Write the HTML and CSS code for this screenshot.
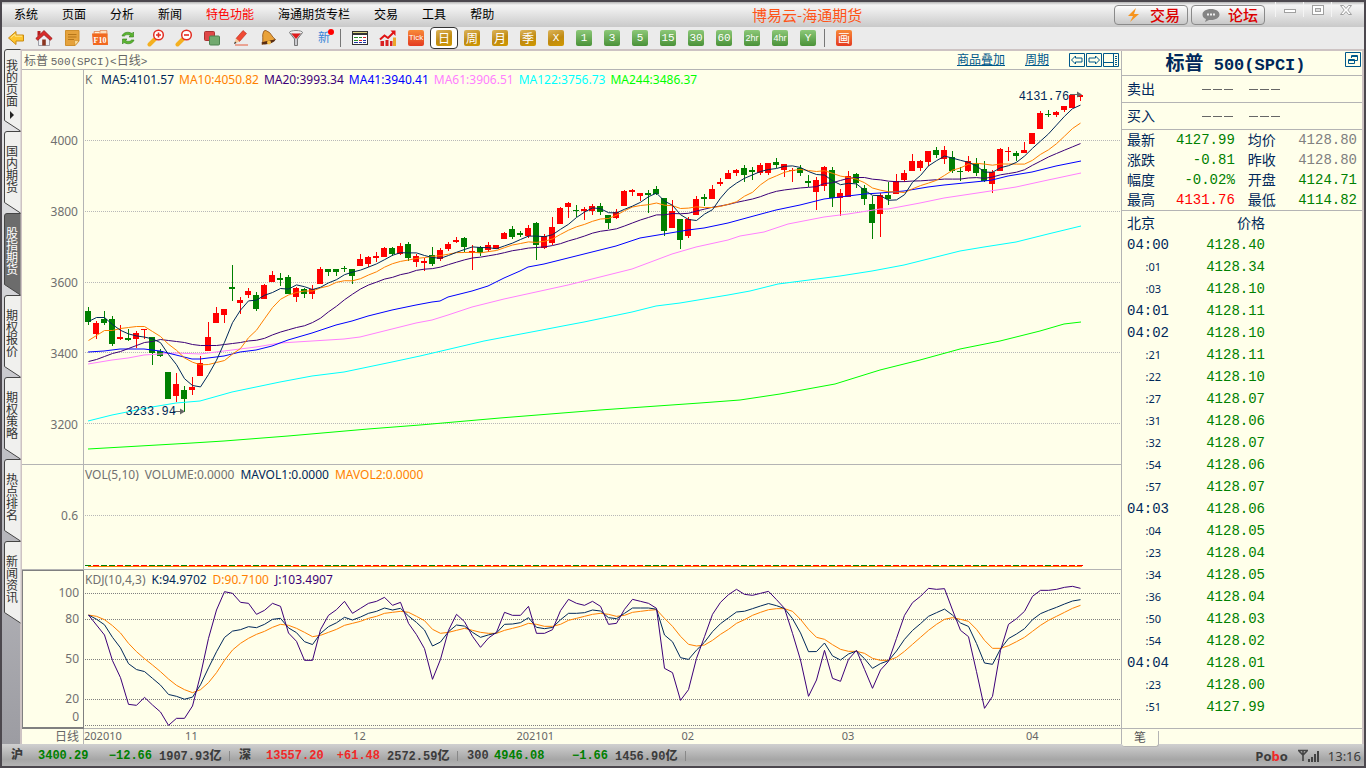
FILE: index.html
```html
<!DOCTYPE html>
<html lang="zh-CN">
<head>
<meta charset="utf-8">
<title>博易云-海通期货</title>
<link rel="stylesheet" href="styles.css">
</head>
<body>
<div class="app">
  <header class="menubar">
    <nav class="menu">
      <button>系统</button><button>页面</button><button>分析</button><button>新闻</button><button class="hot">特色功能</button><button>海通期货专栏</button><button>交易</button><button>工具</button><button>帮助</button>
    </nav>
    <h1 class="app-title">博易云-海通期货</h1>
    <div class="quick">
      <button class="pill"><svg width="16" height="16" viewBox="0 0 16 16"><path d="M10 1 2 9h5l-3 6 9-8H8z" fill="#f7941d"/></svg>交易</button>
      <button class="pill"><svg width="18" height="16" viewBox="0 0 18 16"><path d="M9 2c5 0 8.500 2.400 8.500 5.500S14 13 9 13l-2 0-4 2 1-3C1.500 11 .5 9.500.5 7.500.5 4.400 4 2 9 2z" fill="#858585"/><path d="M5 6.500h2v2H5zM8 6.500h2v2H8zM11 6.500h2v2h-2z" fill="#eee"/></svg>论坛</button>
    </div>
    <div class="win">
      <button aria-label="最小化"><svg width="14" height="14" viewBox="0 0 14 14"><rect x="1.500" y="6.500" width="11" height="3" fill="#fff" stroke="#a0a0a0"/></svg></button>
      <button aria-label="最大化"><svg width="14" height="14" viewBox="0 0 14 14"><rect x="1.500" y="2.500" width="11" height="9" fill="#fff" stroke="#a0a0a0"/><rect x="4.500" y="5.500" width="5" height="3" fill="#ddd" stroke="#a0a0a0"/></svg></button>
      <button aria-label="关闭"><svg width="14" height="14" viewBox="0 0 14 14"><path d="M1.500 2.500h3L7 5.500l2.500-3h3L8.800 7l3.700 4.500h-3L7 8.500l-2.500 3h-3L5.200 7z" fill="#fff" stroke="#a0a0a0"/></svg></button>
    </div>
  </header>

  <div class="toolbar">
    <button aria-label="返回"><svg width="18" height="18" viewBox="0 0 18 18"><path d="M1.500 9 9 2.500V6h7.500v6H9v3.500z" fill="#fdc52e" stroke="#c98a12"/><path d="M4 8.600 8 5.200V7.200h7" fill="none" stroke="#ffe78f"/></svg></button>
    <button aria-label="主页"><svg width="18" height="18" viewBox="0 0 18 18"><path d="M3.500 9v7.500h11V9L9 4.500z" fill="#ededf2" stroke="#8b8b95" stroke-width=".8"/><path d="M.8 9.500 9 1.500l8.200 8-2 1.800L9 5.800l-6.200 5.500z" fill="#d92a2a" stroke="#8d1414" stroke-width=".7"/><path d="M2.500 2H5.500v3L2.500 7.500z" fill="#b51d1d"/><path d="M7.200 10.500h3.600v6H7.200z" fill="#8a3520"/></svg></button>
    <button aria-label="记事"><svg width="18" height="18" viewBox="0 0 18 18"><path d="M2.500 1.500h13.500v10.500L12 16.500H2.500z" fill="#e5a23c" stroke="#cf8f2c"/><path d="M5 5.500h8.500M5 8h8.500M5 10.500h6" stroke="#b5761a"/><path d="M16 12l-4.500-.5.5 5z" fill="#ffe2a0" stroke="#c88420" stroke-width=".6"/></svg></button>
    <button aria-label="F10"><svg width="18" height="18" viewBox="0 0 18 18"><path d="M3 2.500h6v-1h7v5H3z" fill="#f9c59c" stroke="#d8743c" stroke-width=".6"/><path d="M1 4.500h15.500l.5 11.500H2z" fill="#f1681e"/><path d="M4 3.500h4M10 3h5" stroke="#fff3d8"/><text x="9" y="14" class="t-f10">F10</text></svg></button>
    <button aria-label="刷新"><svg width="18" height="18" viewBox="0 0 18 18"><path d="M3 7C4 3.500 9 2 13 4.500l1.500-1.500v5H10l1.500-1.500C9 5 6.500 5.500 5.500 7z" fill="#5cb531" stroke="#2f7d17" stroke-width=".6"/><path d="M15 11c-1 3.500-6 5-10 2.500L3.500 15v-5H8l-1.500 1.500c2.500 1.500 5 1 6-.500z" fill="#5cb531" stroke="#2f7d17" stroke-width=".6"/></svg></button>
    <button aria-label="放大"><svg width="18" height="18" viewBox="0 0 18 18"><path d="m8 10-5.500 5.500" stroke="#f4b020" stroke-width="4" stroke-linecap="round"/><circle cx="11.500" cy="6" r="4.800" fill="#fff" stroke="#e32d22" stroke-width="1.500"/><path d="M9 6h5M11.500 3.500v5" stroke="#e32d22" stroke-width="1.600"/></svg></button>
    <button aria-label="缩小"><svg width="18" height="18" viewBox="0 0 18 18"><path d="m8 10-5.500 5.500" stroke="#f4b020" stroke-width="4" stroke-linecap="round"/><circle cx="11.500" cy="6" r="4.800" fill="#fff" stroke="#e32d22" stroke-width="1.500"/><path d="M9 6h5" stroke="#e32d22" stroke-width="1.600"/></svg></button>
    <button aria-label="叠加"><svg width="18" height="18" viewBox="0 0 18 18"><rect x="1.500" y="2.500" width="10" height="9" rx="1" fill="#df4747" stroke="#a33"/><rect x="6.500" y="7" width="10" height="9" rx="1" fill="#71a96f" stroke="#4c8350"/></svg></button>
    <button aria-label="画线"><svg width="18" height="18" viewBox="0 0 18 18"><path d="M5 9.500 12 1.500l3.500 3-7 8z" fill="#f04a34" stroke="#b5281a" stroke-width=".6"/><path d="M5 9.500 8.500 12.500 3 15z" fill="#f6c99a"/><path d="m3 15 1-2.500 1.500 1.500z" fill="#333"/><path d="M4 16h13" stroke="#e85b3b"/></svg></button>
    <button aria-label="提醒"><svg width="18" height="18" viewBox="0 0 18 18"><path d="M4.500 3c.5-1.800 2.500-2 3.500-.8C12 3 12.500 8 16.500 10.500L3 15.500C5 11 2.500 6 4.500 3z" fill="#e9a23a" stroke="#8a4d12" stroke-width=".8"/><path d="M2.500 13.500c0 4 13 1 14-3-4 .500-10 1.500-14 3z" fill="#5a2d12"/><circle cx="10" cy="13.500" r="2" fill="#f7c04a"/></svg></button>
    <button aria-label="筛选"><svg width="18" height="18" viewBox="0 0 18 18"><path d="M2.500 3.500 7.500 10v6.500h3V10l5-6.500z" fill="#c9c9ce" stroke="#777"/><ellipse cx="9" cy="3.500" rx="6.500" ry="2" fill="#eee" stroke="#888"/><path d="M4.500 4.500h9L9.500 9.500h-1z" fill="#e01b1b"/></svg></button>
    <button class="new">新<i></i></button>
    <span class="bar"></span>
    <button aria-label="列表"><svg width="18" height="18" viewBox="0 0 18 18" shape-rendering="crispEdges"><path d="M1 2h16v14H1z" fill="#333"/><path d="M2 3h14v1H2z" fill="#d8d080"/><path d="M2 6h14v9H2z" fill="#fff"/><path d="M3 8.500h4M3 11.500h4M8 8.500h3" stroke="#2e8b2e"/><path d="M8 11.500h3M12 8.500h3" stroke="#d22"/><path d="M3 13.500h4M8 13.500h3M12 11.500h3M12 13.500h3" stroke="#2436a0"/></svg></button>
    <button aria-label="走势"><svg width="18" height="18" viewBox="0 0 18 18"><path d="M1.500 12h3.500v5H1.500zM6.500 11h3v6h-3z" fill="#d92222"/><path d="M11 12h2.500v5H11z" fill="#d92222"/><path d="M14 8.500h3V17h-3z" fill="#eca72c"/><path d="m1 10.500 4.500-4L9 9l6-6" fill="none" stroke="#e01313" stroke-width="2"/><path d="M11.500 1.500h5V7z" fill="#e01313"/></svg></button>
    <button><span class="tag red tick">Tick</span></button>
    <button class="on"><span class="tag gold">日</span></button>
    <button><span class="tag gold">周</span></button>
    <button><span class="tag gold">月</span></button>
    <button><span class="tag gold">季</span></button>
    <button><span class="tag gold num">X</span></button>
    <button><span class="tag green num">1</span></button>
    <button><span class="tag green num">3</span></button>
    <button><span class="tag green num">5</span></button>
    <button><span class="tag green num">15</span></button>
    <button><span class="tag green num">30</span></button>
    <button><span class="tag green num">60</span></button>
    <button><span class="tag green hr">2hr</span></button>
    <button><span class="tag green hr">4hr</span></button>
    <button><span class="tag green num">Y</span></button>
    <span class="bar"></span>
    <button><span class="tag red">画</span></button>
  </div>

  <main class="main">
    <nav class="tabs" id="tabs">
      <button class="tab first"><span>我的页面</span><i></i></button>
      <button class="tab"><span>国内期货</span></button>
      <button class="tab active"><span>股指期货</span></button>
      <button class="tab"><span>期权报价</span></button>
      <button class="tab"><span>期权策略</span></button>
      <button class="tab"><span>热点排名</span></button>
      <button class="tab"><span>新闻资讯</span></button>
    </nav>

    <section class="charts">
      <div class="chart-head">
        <span class="symbol">标普 <span class="m">500(SPCI)&lt;</span>日线<span class="m">&gt;</span></span>
        <a href="#">商品叠加</a>
        <a href="#">周期</a>
        <div class="head-tools">
          <button aria-label="左"><svg width="16" height="14" viewBox="0 0 16 14"><path d="M.5.5h15v13H.5zM2.500 7l4-4v2H13v4H6.500v2z"/></svg></button>
          <button aria-label="右"><svg width="16" height="14" viewBox="0 0 16 14"><path d="M.5.5h15v13H.5zM13.500 7l-4-4v2H3v4h6.500v2z"/></svg></button>
          <button aria-label="布局"><svg width="16" height="14" viewBox="0 0 16 14"><path d="M.5.5h15v13H.5zM10.500.5v13M.5 9.500h10M12 3.500h2M12 5.500h2M12 7.500h2M12 9.500h2M12 11.500h2"/></svg></button>
        </div>
      </div>

      <div class="axis price-axis"><span>4000</span><span>3800</span><span>3600</span><span>3400</span><span>3200</span></div>
      <div class="plot">
        <svg id="price" viewBox="84 70 1037 394" preserveAspectRatio="none"></svg>
        <div class="legend price-legend"><span class="grey">K</span><span class="navy">MA5:4101.57</span><span class="orange">MA10:4050.82</span><span class="purple">MA20:3993.34</span><span class="blue">MA41:3940.41</span><span class="pink">MA61:3906.51</span><span class="cyan">MA122:3756.73</span><span class="lime">MA244:3486.37</span></div>
        <span class="mark high">4131.76</span>
        <span class="mark low">3233.94</span>
      </div>

      <div class="axis vol-axis"><span>0.6</span></div>
      <div class="plot">
        <svg id="volume" viewBox="84 465 1037 104" preserveAspectRatio="none"></svg>
        <div class="legend"><span class="grey">VOL(5,10)</span><span class="grey">VOLUME:0.0000</span><span class="navy">MAVOL1:0.0000</span><span class="orange">MAVOL2:0.0000</span></div>
      </div>

      <div class="axis kdj-axis"><span>100</span><span>80</span><span class="wide">50</span><span>20</span><span class="slim">0</span></div>
      <div class="plot">
        <svg id="kdj" viewBox="84 570 1037 158" preserveAspectRatio="none"></svg>
        <div class="legend"><span class="grey">KDJ(10,4,3)</span><span class="navy">K:94.9702</span><span class="orange">D:90.7100</span><span class="purple">J:103.4907</span></div>
      </div>

      <div class="period">日线</div>
      <div class="months" id="months"></div>
    </section>

    <aside class="quote">
      <div class="q-title"><h2>标普<span> 500(SPCI)</span></h2><button aria-label="还原"><svg width="16" height="15" viewBox="0 0 16 15"><path d="M.5.5h15v14H.5zM6.500 6V3.500h6v5H10M6.500 4.500h6M3.500 7.500h6v4h-6zM3.500 8.500h6"/></svg></button></div>
      <div class="q-side"><span>卖出</span><i></i><i></i></div>
      <div class="q-side"><span>买入</span><i></i><i></i></div>
      <table class="stats">
        <tr><th>最新</th><td>4127.99</td><th>均价</th><td class="grey">4128.80</td></tr>
        <tr><th>涨跌</th><td>-0.81</td><th>昨收</th><td class="grey">4128.80</td></tr>
        <tr><th>幅度</th><td>-0.02%</td><th>开盘</th><td>4124.71</td></tr>
        <tr><th>最高</th><td class="up">4131.76</td><th>最低</th><td>4114.82</td></tr>
      </table>
      <div class="ticks">
        <table>
          <thead><tr><th>北京</th><th>价格</th></tr></thead>
          <tbody id="ticks"></tbody>
        </table>
      </div>
      <div class="q-tabs"><button>笔</button></div>
    </aside>
  </main>

  <footer class="status">
    <b class="name">沪</b><b class="v1 down">3400.29</b><b class="v2 down">−12.66</b><b class="v3">1907.93<span>亿</span></b><i></i>
    <b class="name">深</b><b class="v1 up">13557.20</b><b class="v2 up">+61.48</b><b class="v3">2572.59<span>亿</span></b><i></i>
    <b class="name">300</b><b class="v1 down">4946.08</b><b class="v2 down">−1.66</b><b class="v3">1456.90<span>亿</span></b><i></i>
    <span class="brand">Po<em>b</em>o</span>
    <svg width="24" height="14" viewBox="0 0 24 14"><path d="M1 1.500h10M6 1v11M2 2l4 4 4-4" fill="none" stroke="#444" stroke-width="1.600"/><path d="M11 10h2v3h-2zM14 8h2v5h-2zM17 5h2v8h-2zM20 2h2v11h-2z" fill="#444"/></svg>
    <time>13:16</time>
  </footer>
</div>
<script src="charts.js"></script>
</body>
</html>
```
FILE: styles.css
```css
* { box-sizing: border-box; }

body {
  margin: 0;
  font: 12px/16px "Liberation Sans", "Noto Sans CJK SC", sans-serif;
  color: #000;
}

button {
  margin: 0;
  padding: 0;
  border: 0;
  background: none;
  font: inherit;
  color: inherit;
}

svg { display: block; }
h1, h2 { margin: 0; font-weight: normal; }
i, em { font-style: normal; }

.app {
  display: grid;
  grid-template-rows: 25px 22px minmax(0, 1fr) 22px;
  height: 100vh;
  min-height: 700px;
  border: 2px solid #4c484e;
  background: #d2d2d6;
}

/* menu bar */
.menubar {
  display: flex;
  align-items: center;
  background: linear-gradient(#b4b4b4, #f4f4f4 3px, #ececec 8px, #c9c9c9);
}
.menu { display: flex; gap: 24px; padding: 1px 0 0 12px; white-space: nowrap; }
.menu .hot { color: #f00; }
.app-title {
  flex: 1;
  padding-left: 6px;
  text-align: center;
  font: 15px/20px "Noto Sans CJK SC", sans-serif;
  color: #ff5418;
}
.quick { display: flex; gap: 3px; }
.pill {
  display: flex;
  align-items: center;
  justify-content: center;
  gap: 8px;
  width: 74px;
  height: 20px;
  padding-left: 4px;
  border: 1px solid #8a8a8a;
  border-radius: 4px;
  background: linear-gradient(#fff, #e4e4e4 45%, #c8c8c8);
  font: 500 15px/18px "Noto Sans CJK SC", sans-serif;
  color: #dc0000;
}
.pill svg { flex: none; }
.win { display: flex; align-self: flex-start; width: 99px; padding-left: 10px; }
.win button {
  display: flex;
  align-items: center;
  justify-content: center;
  width: 28px;
  height: 15px;
  border-left: 1px solid #f4f4f4;
}

/* toolbar */
.toolbar { display: flex; align-items: center; background: #ebebeb; }
.toolbar button {
  display: flex;
  align-items: center;
  justify-content: center;
  width: 28px;
  height: 22px;
}
.toolbar .bar { width: 8px; height: 18px; background: linear-gradient(#777, #777) 2px 0 / 1px 100% no-repeat; }
.toolbar .on { border: 1px solid #333; border-radius: 4px; background: #fff; }
.new { position: relative; font-size: 12px; color: #3a86d8; }
.new i { position: absolute; right: 4px; top: 2px; width: 6px; height: 6px; border-radius: 50%; background: #f00; }
.t-f10 { font: bold 8px "Liberation Serif", serif; fill: #fff; text-anchor: middle; }
.tag {
  width: 16px;
  height: 16px;
  border-radius: 2px;
  font: 12px/15px "Noto Sans CJK SC", sans-serif;
  text-align: center;
  color: #fff;
}
.tag.gold { background: linear-gradient(160deg, #dcb45c, #c08a10 55%, #d19a00); }
.tag.green { background: linear-gradient(#8cc878, #4a9238); }
.tag.red { background: linear-gradient(#f88a38, #e43a20); }
.tag.num { font: 11px/16px "Liberation Mono", monospace; }
.tag.hr { font: 9px/16px "Liberation Sans", sans-serif; }
.tag.tick { font: 8px/16px "Liberation Sans", sans-serif; }

/* main area */
.main {
  display: grid;
  grid-template-columns: 18px minmax(0, 1fr) 243px;
  min-height: 0;
}

.tabs { display: flex; flex-direction: column; padding: 0 0 0 2px; background: linear-gradient(#e9e9ea, #d0d0d4 40%, #9c9ca2); }
.tab {
  position: relative;
  z-index: 0;
  display: flex;
  flex-direction: column;
  align-items: center;
  height: 82px;
  padding-top: 14px;
  color: #333;
}
.tab svg { position: absolute; z-index: -1; left: 0; top: 0; overflow: visible; }
.tab path { fill: #f0f0ee; stroke: #444; }
.tab span { width: 13px; font: 12px/12px "Noto Sans CJK SC", sans-serif; word-break: break-all; }
.tab.first { padding-top: 10px; }
.tab.first i { margin-top: 4px; border: 4px solid transparent; border-left-color: #222; border-right-width: 0; }
.tab.active { color: #fff; }
.tab.active path { fill: #6c6c6c; }

.charts {
  display: grid;
  grid-template: 19px minmax(0, 395fr) minmax(0, 105fr) minmax(0, 159fr) 15px / 62px minmax(0, 1fr);
  border: solid #cdc3c3;
  border-width: 2px 0 0 2px;
  background: #ffffea;
}
.chart-head {
  grid-column: 1 / -1;
  display: flex;
  align-items: center;
  gap: 20px;
  padding: 0 2px;
  border-bottom: 1px solid #b4b4b4;
  color: #666;
}
.symbol { flex: 1; font-family: "Noto Sans CJK SC", sans-serif; font-size: 12px; }
.symbol .m { font: 11px "Liberation Mono", monospace; }
.chart-head a { color: #00588a; }
.head-tools { display: flex; gap: 1px; }
.head-tools path, .q-title path { fill: none; stroke: #00588a; }

.axis {
  display: flex;
  flex-direction: column;
  border: solid #b4b4b4;
  border-width: 0 1px 1px 0;
  padding-right: 5px;
  font: 12px/12px "Noto Sans", sans-serif;
  color: #707070;
}
.axis::before, .axis::after { content: ""; }
.axis span { display: flex; align-items: center; justify-content: flex-end; min-height: 0; }
.price-axis::before { flex: 35; }
.price-axis span { flex: 71; }
.price-axis::after { flex: 4; }
.vol-axis span { flex: 102; }
.vol-axis::after { flex: 2; }
.kdj-axis { border: 1px solid #808080; border-width: 1px 1px 2px 1px; padding-right: 4px; }
.kdj-axis::before { flex: 9; }
.kdj-axis span { flex: 26; }
.kdj-axis .wide { flex: 54; }
.kdj-axis .slim { flex: 10; }
.kdj-axis::after { flex: 5; }

.plot { position: relative; border-bottom: 1px solid #b4b4b4; }
.plot svg { width: 100%; height: 100%; }
.plot .grid { stroke: #b8b8b8; stroke-dasharray: 1 1; shape-rendering: crispEdges; }
#kdj .grid { stroke: #808080; }
.bars rect { shape-rendering: crispEdges; }
.line { fill: none; stroke-width: 1; vector-effect: non-scaling-stroke; }

.legend {
  position: absolute;
  left: 1px;
  top: 2px;
  display: flex;
  gap: 6px;
  font: 12px/16px "Noto Sans", sans-serif;
  white-space: nowrap;
}
.price-legend { gap: 5px; }
.price-legend .grey { width: 11px; }
.mark {
  position: absolute;
  font: 12px/14px "Liberation Mono", monospace;
  color: #00285a;
}
.mark.high { right: 5%; top: 5%; }
.mark.low { left: 4%; top: 85%; }

.grey { color: #707070; }
.navy { color: #00285a; }
.orange { color: #ff8000; }
.purple { color: #3c0078; }
.blue { color: #00f; }
.pink { color: #ff80ff; }
.cyan { color: #0ff; }
.lime { color: #0f0; }
.up { color: #f00; }
.down { color: #008000; }

.period {
  padding-right: 4px;
  border-right: 1px solid #b4b4b4;
  text-align: right;
  font: 12px/14px "Noto Sans CJK SC", sans-serif;
  color: #666;
}
.months { display: flex; font: 11px/14px "Noto Sans", sans-serif; color: #666; }

/* quote panel */
.quote {
  display: flex;
  flex-direction: column;
  min-height: 0;
  border: solid #cdc3c3;
  border-width: 2px 2px 0 0;
  background: #ffffea;
  box-shadow: inset 1px 0 #b4b4b4;
  padding-left: 1px;
  font-size: 14px;
  color: #00285a;
}
.q-title { display: flex; align-items: flex-start; height: 25px; padding: 1px 1px 0 4px; border-bottom: 1px solid #b4b4b4; }
.q-title h2 { flex: 1; text-align: center; font: bold 19px/20px "Noto Sans CJK SC", sans-serif; }
.q-title span { font: bold 17px/20px "Liberation Mono", monospace; white-space: pre; }
.q-side {
  display: flex;
  align-items: center;
  gap: 15px;
  height: 27px;
  padding-left: 5px;
  border-bottom: 1px solid #b4b4b4;
}
.q-side span { width: 60px; }
.q-side i { width: 32px; height: 1px; background: repeating-linear-gradient(90deg, #666 0 9px, transparent 9px 11px); }

table { border-collapse: collapse; table-layout: fixed; }
th, td { padding: 0; }
th { font-weight: normal; text-align: left; }
td { font: 14px/20px "Liberation Mono", monospace; text-align: right; color: #008000; }
.stats { width: 100%; flex: none; border-bottom: 1px solid #b4b4b4; }
.stats th { height: 20px; line-height: 20px; padding-left: 5px; width: 19%; }
.stats th + td + th { padding-left: 13px; width: 24%; }
.stats td:last-child { padding-right: 5px; width: 29%; }
.stats .grey { color: #808080; }
.stats .up { color: #f00; }
.ticks { flex: 1; min-height: 0; overflow: hidden; border-bottom: 1px solid #b4b4b4; padding-left: 5px; }
.ticks tr { height: 22px; }
.ticks thead tr { height: 23px; }
.ticks th:first-child { width: 44px; }
.ticks th:last-child { width: 94px; text-align: right; }
.ticks td { line-height: 22px; }
.ticks td:first-child { text-align: left; color: #00285a; }
.ticks td.sec { padding-right: 10px; text-align: right; font: 11px/22px "Noto Sans", sans-serif; }
.q-tabs { height: 15px; }
.q-tabs button {
  width: 37px;
  height: 16px;
  margin-top: -1px;
  position: relative;
  border: 1px solid #b4b4b4;
  border-top: 0;
  border-left: 0;
  border-radius: 0 0 3px 3px;
  background: #ffffea;
  font-size: 12px;
  line-height: 14px;
  color: #555;
}

/* status bar */
.status {
  display: flex;
  align-items: center;
  padding: 2px 3px 0 9px;
  background: linear-gradient(#d0d0d0, #a6a6a6 70%, #b4b4b4);
  font: bold 12px/16px "Liberation Mono", monospace;
  white-space: nowrap;
  color: #3c3c3c;
}
.status b { flex: none; }
.status .name { width: 27px; font-family: "Liberation Mono", "Noto Sans CJK SC", monospace; }
.status .v1 { width: 61px; }
.status .v2 { width: 53px; text-align: right; }
.status .v3 { width: 77px; padding-left: 7px; }
.status .v3 span { font-family: "Noto Sans CJK SC", sans-serif; }
.status i { width: 1px; height: 10px; margin-right: 9px; background: #888; }
.status .up { color: #f02828; }
.brand { margin-left: auto; margin-right: 9px; font: bold 13px/16px "Open Sans", sans-serif; }
.brand em { color: #f02828; }
.status time { margin-left: 7px; font: 13px/16px "Noto Sans", sans-serif; }
```
FILE: charts.js
```js
// Each session: direction, then high, body top, body bottom and low.
const candles = `g307 311 322 325|r321 323 334 339|g311 319 323 325|g316 319 344 346|r325 337 339 340|g329 338 340 341|r331 333 339 348|r329 329 330 339|g337 337 353 365|g349 351 356 357
g372 372 399 399|r373 384 396 402|g386 390 399 412|r377 387 390 395|r356 363 376 376|r322 337 351 351|r307 313 323 323|r309 309 315 323|g265 287 289 301|r297 300 303 314
r288 291 295 298|g292 295 309 311|r284 285 299 299|r271 275 282 282|g273 278 280 286|g275 277 294 294|r287 288 297 302|g288 289 294 298|r285 289 294 299|r267 269 284 284
g269 269 272 276|g269 269 272 276|g266 268 269 272|g269 269 276 284|r254 259 266 266|r256 257 264 267|r252 256 258 262|r247 248 257 257|g247 248 254 256|r243 246 254 255
g242 244 258 261|r254 256 262 267|r258 261 263 271|g247 255 264 266|r248 250 259 261|r242 244 249 251|r237 240 242 243|g237 238 247 252|r245 251 253 270|g246 247 253 256
r242 245 250 252|r245 245 249 249|r232 233 239 239|g226 229 237 239|g231 233 235 237|r225 228 236 238|g222 223 245 260|r234 236 248 249|r217 227 243 245|r207 208 224 224
r202 203 207 218|g205 210 211 217|r207 209 211 220|r204 206 211 215|g203 206 212 215|g215 215 223 229|r209 212 218 219|r190 191 206 206|r189 190 192 196|r193 193 196 201
g190 193 195 213|g186 189 194 195|g198 198 231 236|r200 211 228 228|g219 219 240 249|r217 219 236 238|r196 199 215 215|g194 197 199 206|r185 189 199 199|r178 182 184 186
r170 173 179 179|r169 170 173 176|g165 168 175 182|g167 170 172 180|r163 165 173 175|r163 163 173 175|g158 162 165 168|r164 164 170 177|r168 170 171 182|g165 168 173 176
g175 181 183 187|r177 180 192 210|r166 167 186 191|g167 170 198 207|r189 193 198 216|r171 176 197 197|g173 174 183 188|g185 188 199 205|g196 204 223 239|r193 195 214 237
g182 195 199 205|r174 181 194 194|r170 173 180 182|r154 161 171 171|r160 161 168 171|r151 151 162 166|g147 150 155 158|r146 150 159 164|g151 157 171 173|g167 171 172 181
r156 161 171 172|g158 163 173 176|g161 169 181 182|r170 172 184 193|r148 149 171 171|r147 151 152 161|g151 153 156 161|r142 150 153 153|r133 133 144 144|r111 113 129 129
g110 114 115 117|r111 112 115 117|r106 106 110 112|r95 95 108 108|r95 95 97 101`
  .split(/[|\n]/).map(s => [s[0], ...s.slice(1).split(' ').map(Number)]);

const kdjJ = [165,195,225,302,353,433,436,412,435,456,496,475,475,438,345,235,150,95,100,127,130,163,151,130,139,219,244,301,301,209,166,149,124,160,145,130,124,112,136,127,190,224,266,358,298,211,163,185,229,262,234,217,157,166,166,139,220,220,209,152,118,130,136,124,139,193,190,148,118,124,130,145,325,338,421,389,295,230,163,127,104,88,103,106,100,94,119,145,220,300,409,360,271,355,364,298,271,328,385,330,304,235,166,128,109,85,88,86,150,211,230,335,445,409,271,193,176,154,109,91,91,88,82,79,85];
const kdjD = [165,169,179,197,219,250,275,296,315,335,357,376,389,398,389,368,338,301,270,250,235,223,214,202,193,196,205,217,230,226,217,208,196,190,184,175,169,160,157,154,157,169,182,208,220,217,211,205,211,217,220,220,211,205,199,190,193,199,199,193,181,175,169,163,160,163,169,166,157,154,151,149,175,199,229,253,258,255,241,223,208,190,179,166,157,149,146,146,154,178,208,232,238,254,268,274,274,280,295,301,301,292,274,253,232,211,193,178,173,178,184,208,241,265,265,257,245,232,214,196,181,169,157,145,136];

const x = i => 88 + 8 * i;
const fill = { r: '#f00', g: '#008000' };
const close = candles.map(c => c[0] === 'g' ? c[3] : c[2]);
const grid = rows => rows.map(y => `<path class="grid" d="M85 ${y}.5H1121"/>`).join('');
const line = (points, color) => `<polyline class="line" stroke="${color}" points="${points}"/>`;
const series = values => values.map((v, i) => `${x(i) + .5},${(v + .5).toFixed(2)}`).join(' ');

// Moving average over n sessions; seed holds the values before the window is full.
function average(n, seed) {
  return close.map((_, i) => i < seed.length ? seed[i]
    : close.slice(i - n + 1, i + 1).reduce((a, b) => a + b) / n);
}

const ma5 = average(5, [321,317,317,324]);
const ma10 = average(10, [340,335,330,330,328,327,326,326,331]);
const ma20 = average(20, [361,359,356,353,351,348,345,342,341,339,340,341,342,344,345,345,345,344,343]);
const ma41 = '88,352 104,351 120,349 144,349 160,351 176,355 192,359 200,359 224,356 240,352 256,350 272,346 288,340 312,333 336,325 352,321 368,316 392,310 416,305 432,302 440,301 448,297 472,291 488,286 504,278 520,271 528,267 544,264 568,258 600,250 616,246 640,238 664,234 688,230 704,228 728,223 750,217 776,210 800,205 824,199 848,196 864,194 880,193 904,191 928,187 944,185 984,181 992,180 1008,176 1032,172 1056,166 1081,161';
const ma61 = '88,364 112,360 128,358 144,355 176,353 200,354 224,351 256,347 280,343 312,341 344,339 360,337 392,329 416,323 432,320 448,315 472,307 504,299 536,292 568,285 600,277 632,269 648,263 672,254 696,247 728,240 740,236 764,232 788,224 824,217 848,214 880,209 888,209 920,203 944,198 984,192 1016,187 1048,180 1081,173';
const ma122 = '88,421 112,415 152,407 176,403 200,401 232,392 280,382 312,376 344,372 368,367 392,362 420,356 484,341 542,330 568,325 584,322 608,317 632,312 656,306 680,303 704,299 728,295 750,291 778,284 809,280 840,276 872,271 904,265 944,255 960,251 984,247 1016,242 1048,234 1081,226';
const ma244 = '88,449 192,443 224,441 288,436 368,429 420,425 500,418 600,410 700,403 740,400 780,394 835,384 880,370 920,360 960,349 1000,341 1040,331 1064,324 1081,322';

document.getElementById('price').innerHTML =
  grid([140, 211, 282, 352, 423]) +
  '<g class="bars">' + candles.map(([dir, high, top, bottom, low], i) =>
    `<rect x="${x(i)}" y="${high}" width="1" height="${Math.max(1, low - high)}" fill="${fill[dir]}"/>` +
    `<rect x="${x(i) - 3}" y="${top}" width="6" height="${Math.max(1, bottom - top)}" fill="${fill[dir]}"/>`).join('') + '</g>' +
  line(ma244, '#0f0') + line(ma122, '#0ff') + line(ma61, '#ff80ff') + line(ma41, '#00f') +
  line(series(ma20), '#3c0078') + line(series(ma10), '#ff8000') + line(series(ma5), '#00285a') +
  '<path class="line" stroke="#666" d="M173 411.500h11M1070 94.500h10"/><path fill="#666" d="M180 408.500l5 3-5 3zM1077 91.500l5 3-5 3z"/>';

document.getElementById('volume').innerHTML =
  grid([515]) + '<g class="bars">' +
  candles.map((c, i) => `<rect x="${x(i) - 3}" y="565" width="6" height="1" fill="${fill[c[0]]}"/>`).join('') +
  '<rect x="88" y="566" width="994" height="1" fill="#ff8000"/></g>';

const scale = v => 560 + v / 3;
document.getElementById('kdj').innerHTML =
  grid([593, 619, 659, 699, 725]) +
  line(series(kdjD.map(v => scale(v) - .5)), '#ff8000') +
  line(series(kdjD.map((d, i) => scale((kdjJ[i] + 2 * d) / 3) - .5)), '#00285a') +
  line(series(kdjJ.map(v => scale(v) - .5)), '#3c0078');

document.getElementById('months').innerHTML =
  [['202010', 101], ['11', 168], ['12', 163], ['202101', 165], ['02', 160], ['03', 184], ['04', 95]]
    .map(([label, span]) => `<span style="flex:${span} 1 0">${label}</span>`).join('');

document.getElementById('ticks').innerHTML =
  ('04:00 4128.40|:01 4128.34|:03 4128.10|04:01 4128.11|04:02 4128.10|:21 4128.11|:22 4128.10|:27 4128.07|:31 4128.06|:32 4128.07|:54 4128.06|:57 4128.07|' +
   '04:03 4128.06|:04 4128.05|:23 4128.04|:34 4128.05|:36 4128.04|:50 4128.03|:54 4128.02|04:04 4128.01|:23 4128.00|:51 4127.99')
    .split('|').map(row => row.split(' '))
    .map(([time, price]) => `<tr><td${time[0] === ':' ? ' class="sec"' : ''}>${time}</td><td>${price}</td></tr>`).join('');

document.querySelectorAll('.tab').forEach(tab => tab.insertAdjacentHTML('afterbegin',
  '<svg width="16" height="82" viewBox="0 0 16 82"><path d="M16.500 .5H3Q.5 .5 .5 3V71.500L16.500 82"/></svg>'));
```
